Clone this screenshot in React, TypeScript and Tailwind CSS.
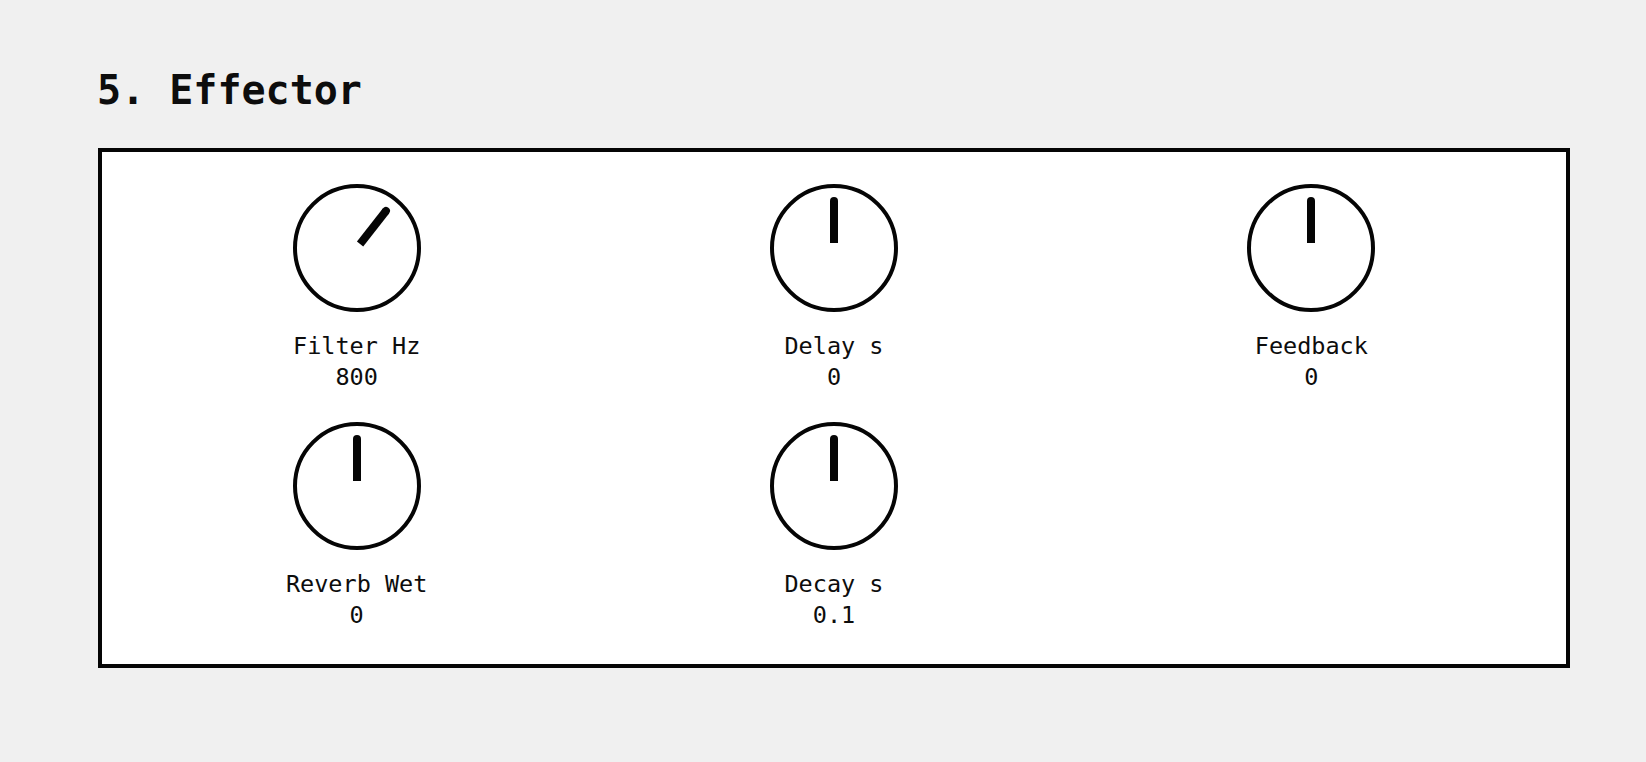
import React from 'react'

type Param = { label: string; value: string; angle: number }

const params: Param[] = [
  { label: 'Filter Hz', value: '800', angle: 38 },
  { label: 'Delay s', value: '0', angle: 0 },
  { label: 'Feedback', value: '0', angle: 0 },
  { label: 'Reverb Wet', value: '0', angle: 0 },
  { label: 'Decay s', value: '0.1', angle: 0 },
]

function Knob({ label, value, angle }: Param) {
  return (
    <div className="flex flex-col items-center">
      <svg width="128" height="128" viewBox="0 0 128 128" className="block">
        <circle cx="64" cy="64" r="62" fill="white" stroke="#050505" strokeWidth="4" />
        <g transform={`rotate(${angle} 64 64)`} fill="#050505">
          <rect x="60" y="17" width="8" height="42" />
          <circle cx="64" cy="17" r="4" />
        </g>
      </svg>
      <div className="mt-[19px] text-center text-[23.5px] leading-[31px] text-[#0d0d0d]">
        <div>{label}</div>
        <div>{value}</div>
      </div>
    </div>
  )
}

export default function App() {
  return (
    <div
      className="min-h-screen bg-[#f0f0f0] pl-[98px] pt-[70px]"
      style={{ fontFamily: '"DejaVu Sans Mono", "Liberation Mono", monospace' }}
    >
      <h1 className="text-[40px] font-bold leading-[40px] text-[#0d0d0d] -ml-[1px]">5. Effector</h1>
      <div className="mt-[38px] w-[1472px] h-[520px] border-4 border-[#050505] bg-white px-8 pt-8 pb-[34px]">
        <div className="grid grid-cols-3 items-start gap-x-8 gap-y-[29px]">
          {params.map((p) => (
            <Knob key={p.label} {...p} />
          ))}
        </div>
      </div>
    </div>
  )
}
